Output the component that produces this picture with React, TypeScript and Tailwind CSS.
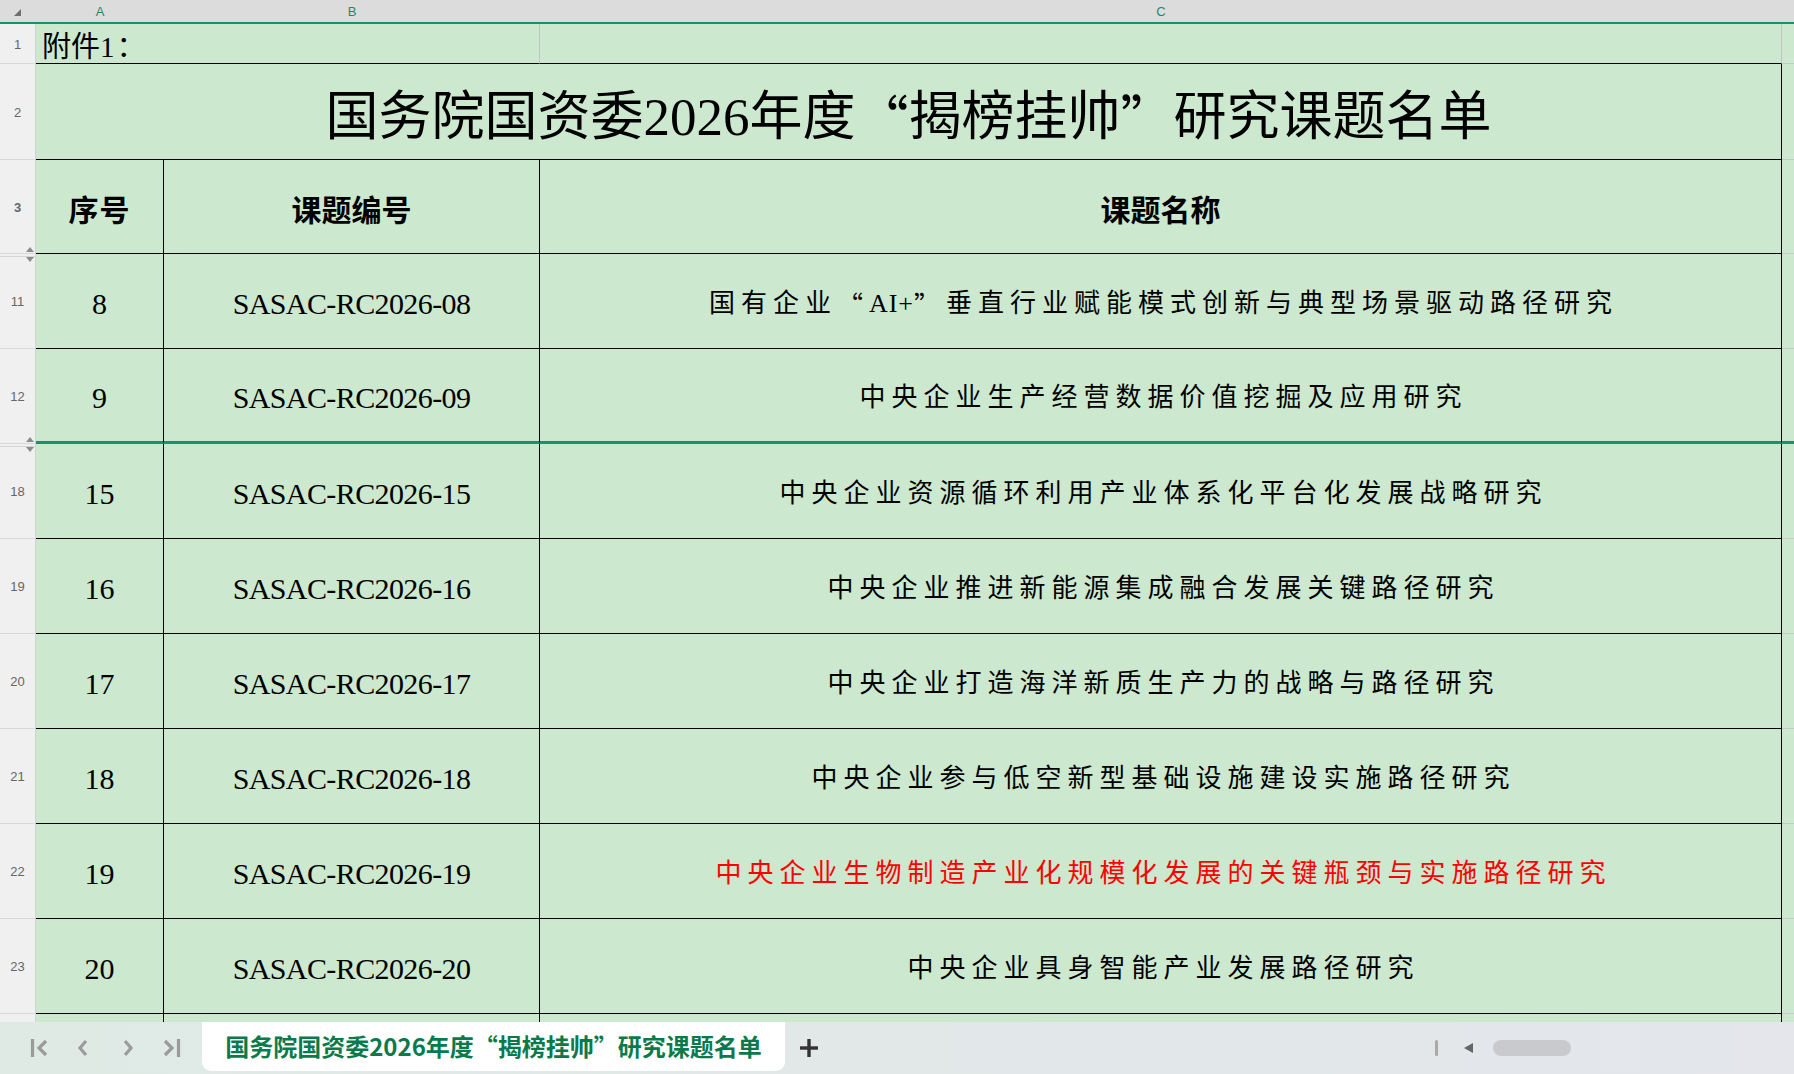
import type { ReactNode } from "react";

type Topic = {
  row: number;
  no: number;
  code: string;
  name: string;
  red?: boolean;
  hiddenAbove?: boolean;
  splitBelow?: boolean;
};

const topics: Topic[] = [
  { row: 11, no: 8, code: "SASAC-RC2026-08", name: "国有企业“AI+”垂直行业赋能模式创新与典型场景驱动路径研究", hiddenAbove: true },
  { row: 12, no: 9, code: "SASAC-RC2026-09", name: "中央企业生产经营数据价值挖掘及应用研究", splitBelow: true },
  { row: 18, no: 15, code: "SASAC-RC2026-15", name: "中央企业资源循环利用产业体系化平台化发展战略研究", hiddenAbove: true },
  { row: 19, no: 16, code: "SASAC-RC2026-16", name: "中央企业推进新能源集成融合发展关键路径研究" },
  { row: 20, no: 17, code: "SASAC-RC2026-17", name: "中央企业打造海洋新质生产力的战略与路径研究" },
  { row: 21, no: 18, code: "SASAC-RC2026-18", name: "中央企业参与低空新型基础设施建设实施路径研究" },
  { row: 22, no: 19, code: "SASAC-RC2026-19", name: "中央企业生物制造产业化规模化发展的关键瓶颈与实施路径研究", red: true },
  { row: 23, no: 20, code: "SASAC-RC2026-20", name: "中央企业具身智能产业发展路径研究" },
];

// curly quotes come from the CJK face so they take a full-width slot;
// latin runs between them are kept tighter than the spaced-out hanzi
function withQuotes(text: string, latinTracking = false): ReactNode[] {
  return text.split(/([“”])/).map((part, i) => {
    if (part === "“" || part === "”") {
      return (
        <span key={i} className="font-['Noto_Sans_CJK_SC',sans-serif]">
          {part}
        </span>
      );
    }
    if (latinTracking && /^[A-Za-z+]+$/.test(part)) {
      return (
        <span key={i} className="tracking-[1px]">
          {part}
        </span>
      );
    }
    return part;
  });
}

function HiddenMark() {
  return (
    <>
      <div className="absolute top-[2px] right-0 left-0 h-px bg-[#d4d4d4]" />
      <svg className="absolute -top-[7px] right-[1px]" width="8" height="15" viewBox="0 0 8 15">
        <polygon points="4,0 8,5 0,5" fill="#8c8c8c" />
        <polygon points="0,10 8,10 4,15" fill="#8c8c8c" />
      </svg>
    </>
  );
}

function RowHead({ n, hidden }: { n?: number; hidden?: boolean }) {
  return (
    <div className="relative flex w-[36px] shrink-0 items-center justify-center border-r border-b border-r-[#d2d2d2] border-b-[#d8d8d8] bg-[#f0f0f0] pt-[2px] font-['Liberation_Sans',sans-serif] text-[13px] text-[#666]">
      {n}
      {hidden && <HiddenMark />}
    </div>
  );
}

function TopicRow({ t }: { t: Topic }) {
  const bottom = t.splitBelow ? "border-b-[3px] border-b-[#17936a]" : "border-b border-b-black";
  return (
    <div className="flex h-[95px] shrink-0">
      <RowHead n={t.row} hidden={t.hiddenAbove} />
      <div className={`flex w-[128px] shrink-0 items-center justify-center border-r border-r-black ${bottom} pt-[5px] font-['Liberation_Serif',serif] text-[30px] text-black`}>
        {t.no}
      </div>
      <div className={`flex w-[376px] shrink-0 items-center justify-center border-r border-r-black ${bottom} pt-[5px] font-['Liberation_Serif',serif] text-[30px] tracking-[-0.6px] text-black`}>
        {t.code}
      </div>
      <div
        className={`flex w-[1242px] shrink-0 items-center justify-center border-r border-r-black ${bottom} pt-[5px] pl-[6px] font-['Liberation_Serif','Noto_Sans_CJK_SC',serif] text-[26px] tracking-[6px] ${
          t.red ? "text-[#ff0000]" : "text-black"
        }`}
      >
        {withQuotes(t.name, true)}
      </div>
      <div className={`flex-1 ${t.splitBelow ? "border-b-[3px] border-b-[#17936a]" : "border-b border-b-[#c8c8c8]"}`} />
    </div>
  );
}

function NavFirst() {
  return (
    <svg width="20" height="20" viewBox="0 0 20 20" fill="none" stroke="#9b9b9b" strokeWidth="3.2">
      <line x1="2.5" y1="1" x2="2.5" y2="19" />
      <polyline points="16,3 9,10 16,17" strokeLinejoin="miter" />
    </svg>
  );
}

function NavLast() {
  return (
    <svg width="20" height="20" viewBox="0 0 20 20" fill="none" stroke="#9b9b9b" strokeWidth="3.2">
      <line x1="17.5" y1="1" x2="17.5" y2="19" />
      <polyline points="4,3 11,10 4,17" strokeLinejoin="miter" />
    </svg>
  );
}

function NavPrev() {
  return (
    <svg width="12" height="20" viewBox="0 0 12 20" fill="none" stroke="#9b9b9b" strokeWidth="3.2">
      <polyline points="9,3 3,10 9,17" />
    </svg>
  );
}

function NavNext() {
  return (
    <svg width="12" height="20" viewBox="0 0 12 20" fill="none" stroke="#9b9b9b" strokeWidth="3.2">
      <polyline points="3,3 9,10 3,17" />
    </svg>
  );
}

export default function App() {
  return (
    <div className="flex h-screen w-full flex-col overflow-hidden bg-[#cce8cf] font-['Liberation_Sans','Noto_Sans_CJK_SC',sans-serif]">
      {/* sheet area */}
      <div className="flex min-h-0 flex-1 flex-col overflow-hidden">
        {/* column letters */}
        <div className="flex h-[24px] shrink-0 border-b-2 border-b-[#17936a] bg-[#dcdcdc] pt-[1px] text-[13px] text-[#1f8a64]">
          <div className="relative w-[36px] shrink-0">
            <svg className="absolute top-[8px] left-[14px]" width="7" height="7" viewBox="0 0 7 7">
              <polygon points="7,0 7,7 0,7" fill="#6f6f6f" />
            </svg>
          </div>
          <div className="flex w-[128px] shrink-0 items-center justify-center">A</div>
          <div className="flex w-[376px] shrink-0 items-center justify-center">B</div>
          <div className="flex w-[1242px] shrink-0 items-center justify-center">C</div>
          <div className="flex-1" />
        </div>

        {/* row 1 */}
        <div className="flex h-[40px] shrink-0">
          <RowHead n={1} />
          <div className="flex w-[504px] shrink-0 items-center border-r border-b border-r-[#c4c4c4] border-b-black pt-[7px] pl-[6px] font-['Liberation_Serif','Noto_Sans_CJK_SC',serif] text-[29px] leading-none text-black">
            附件1<span className="ml-[2px]">：</span>
          </div>
          <div className="w-[1242px] shrink-0 border-r border-b border-r-[#c4c4c4] border-b-black" />
          <div className="flex-1 border-b border-b-[#c8c8c8]" />
        </div>

        {/* row 2: title */}
        <div className="flex h-[96px] shrink-0">
          <RowHead n={2} />
          <div className="flex w-[1746px] shrink-0 items-center justify-center border-r border-b border-r-black border-b-black pt-[12px] font-['Liberation_Serif','Noto_Sans_CJK_SC',serif] text-[53px] leading-none text-black">
            {withQuotes("国务院国资委2026年度“揭榜挂帅”研究课题名单")}
          </div>
          <div className="flex-1 border-b border-b-[#c8c8c8]" />
        </div>

        {/* row 3: column titles */}
        <div className="flex h-[94px] shrink-0 font-['Noto_Sans_CJK_SC',sans-serif] text-[30px] font-bold text-black">
          <RowHead n={3} />
          <div className="flex w-[128px] shrink-0 items-center justify-center border-r border-b border-r-black border-b-black pt-[3px] tracking-[1px]">序号</div>
          <div className="flex w-[376px] shrink-0 items-center justify-center border-r border-b border-r-black border-b-black pt-[3px]">课题编号</div>
          <div className="flex w-[1242px] shrink-0 items-center justify-center border-r border-b border-r-black border-b-black pt-[3px]">课题名称</div>
          <div className="flex-1 border-b border-b-[#c8c8c8]" />
        </div>

        {topics.map((t) => (
          <TopicRow key={t.row} t={t} />
        ))}

        {/* next row, cut off by the tab bar */}
        <div className="flex h-[95px] shrink-0">
          <RowHead />
          <div className="w-[128px] shrink-0 border-r border-r-black" />
          <div className="w-[376px] shrink-0 border-r border-r-black" />
          <div className="w-[1242px] shrink-0 border-r border-r-black" />
          <div className="flex-1" />
        </div>
      </div>

      {/* sheet tabs */}
      <div className="flex h-[52px] shrink-0 items-start bg-linear-to-r from-[#dfeae5] to-[#e4e6eb]">
        <div className="flex h-[52px] w-[202px] shrink-0 items-center">
          <div className="ml-[30px]">
            <NavFirst />
          </div>
          <div className="ml-[27px]">
            <NavPrev />
          </div>
          <div className="ml-[33px]">
            <NavNext />
          </div>
          <div className="ml-[27px]">
            <NavLast />
          </div>
        </div>
        <div className="flex h-[49px] w-[583px] shrink-0 items-center justify-center rounded-b-[9px] bg-white pb-[2px] font-['Noto_Sans_CJK_SC',sans-serif] text-[24px] font-bold text-[#0b7a4b]">
          国务院国资委2026年度“揭榜挂帅”研究课题名单
        </div>
        <div className="flex h-[52px] w-[48px] shrink-0 items-center justify-center">
          <svg width="20" height="20" viewBox="0 0 20 20" stroke="#333" strokeWidth="3.4">
            <line x1="10" y1="1" x2="10" y2="19" />
            <line x1="1" y1="10" x2="19" y2="10" />
          </svg>
        </div>
        <div className="flex-1" />
        <div className="flex h-[52px] items-center pr-[223px]">
          <div className="h-[16px] w-[3px] rounded-full bg-[#a9a9a9]" />
          <svg className="ml-[26px]" width="9" height="10" viewBox="0 0 9 10">
            <polygon points="9,0 9,10 0,5" fill="#666" />
          </svg>
          <div className="ml-[20px] h-[16px] w-[78px] rounded-full bg-[#c9cacd]" />
        </div>
      </div>
    </div>
  );
}
